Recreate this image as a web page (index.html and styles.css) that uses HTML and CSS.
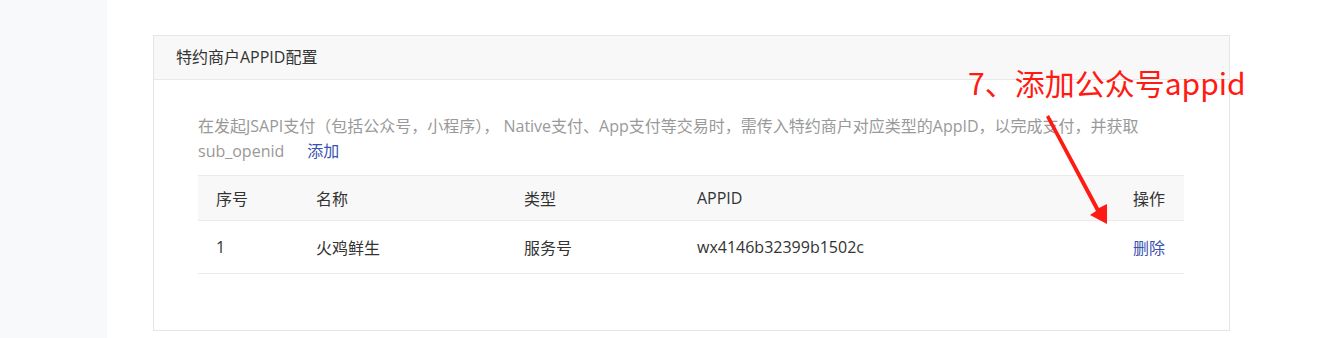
FILE: index.html
```html
<!DOCTYPE html>
<html lang="zh-CN">
<head>
  <meta charset="UTF-8">
  <title>特约商户APPID配置</title>
  <link rel="stylesheet" href="styles.css">
</head>
<body>
  <aside class="sidebar"></aside>
  <main class="content">
    <section class="card">
      <div class="card-header">特约商户APPID配置</div>
      <div class="card-body">
        <p class="desc">在发起JSAPI支付（包括公众号，小程序）， Native支付、App支付等交易时，需传入特约商户对应类型的AppID，以完成支付，并获取 sub_openid<a href="#" class="link add-link">添加</a></p>
        <table class="appid-table">
          <thead>
            <tr>
              <th class="col-no">序号</th>
              <th class="col-name">名称</th>
              <th class="col-type">类型</th>
              <th class="col-id">APPID</th>
              <th class="col-op">操作</th>
            </tr>
          </thead>
          <tbody>
            <tr>
              <td>1</td>
              <td>火鸡鲜生</td>
              <td>服务号</td>
              <td>wx4146b32399b1502c</td>
              <td class="col-op"><a href="#" class="link">删除</a></td>
            </tr>
          </tbody>
        </table>
      </div>
    </section>
  </main>

  <!-- annotation layer -->
  <div class="note">7、添加公众号appid</div>
  <svg class="arrow" width="1324" height="338" viewBox="0 0 1324 338">
    <polygon points="1046,117 1049,115 1099,208 1107,204 1107,224 1090,215 1096,211" fill="#ff1a12"/>
  </svg>
</body>
</html>
```
FILE: styles.css
```css
body {
  margin: 0;
  height: 338px;
  display: flex;
  position: relative;
  overflow: hidden;
  background: #ffffff;
  font-family: "Open Sans", "Noto Sans CJK SC", sans-serif;
  font-size: 16px;
  color: #333333;
}

.sidebar {
  width: 107px;
  flex-shrink: 0;
  background-color: #f8f9fb;
}

.content {
  flex: 1;
  padding: 35px 94px 0 46px;
}

.card {
  border: 1px solid #e6e6e6;
  height: 296px;
  box-sizing: border-box;
}

.card-header {
  height: 43px;
  line-height: 43px;
  padding-left: 22px;
  background-color: #f8f8f8;
  border-bottom: 1px solid #e8e8e8;
  color: #333333;
}

.card-body {
  padding: 34px 45px 0 44px;
}

.desc {
  margin: 0 0 11px;
  line-height: 25px;
  color: #999999;
}

.link {
  color: #3a52b0;
  text-decoration: none;
}

.add-link {
  display: inline-block;
  margin-left: 23px;
}

.appid-table {
  width: 100%;
  border-collapse: collapse;
}

.appid-table th,
.appid-table td {
  text-align: left;
  font-weight: normal;
  padding: 0 0 0 18px;
}

.appid-table th {
  height: 44px;
  background-color: #f8f8f8;
  border-top: 1px solid #ebebeb;
  border-bottom: 1px solid #ebebeb;
  color: #333333;
}

.appid-table td {
  height: 52px;
  border-bottom: 1px solid #ebebeb;
}

.appid-table .col-no { width: 82px; }
.appid-table .col-name { width: 190px; }
.appid-table .col-type { width: 155px; }

.appid-table .col-op {
  text-align: right;
  padding-right: 19px;
}

.note {
  position: absolute;
  left: 968px;
  top: 62px;
  font-family: "Noto Sans CJK SC", sans-serif;
  font-size: 30px;
  line-height: 40px;
  color: #ff1a12;
  white-space: nowrap;
}

.arrow {
  position: absolute;
  left: 0;
  top: 0;
  pointer-events: none;
}
```
